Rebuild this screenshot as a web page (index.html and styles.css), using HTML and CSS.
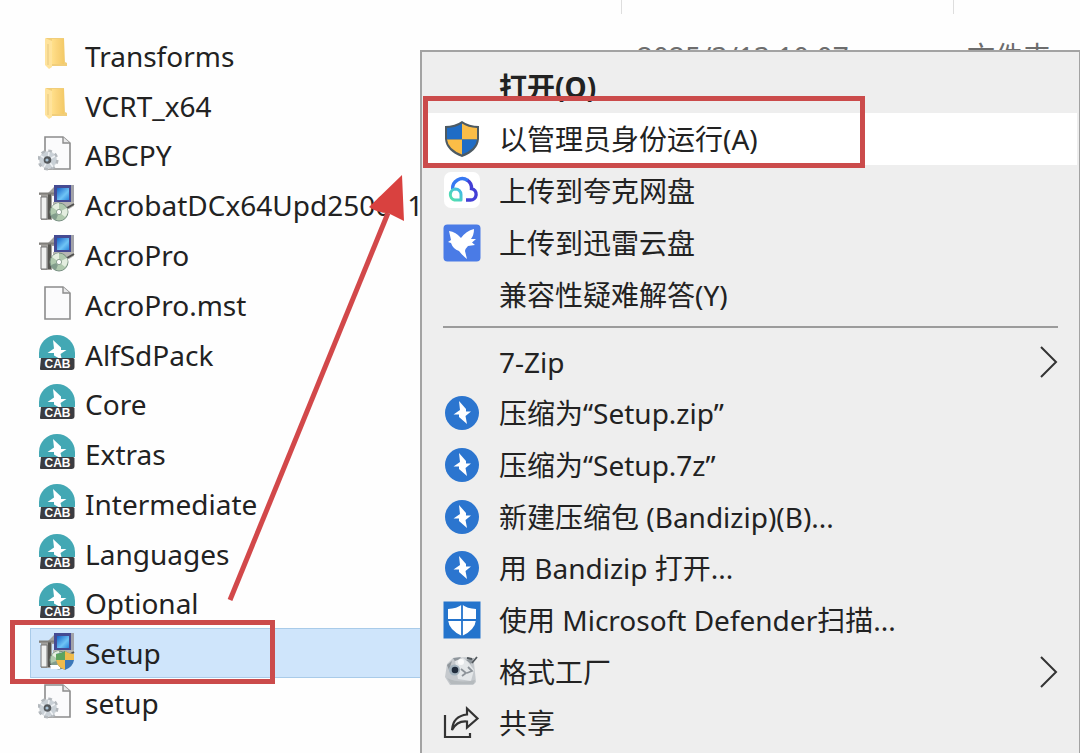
FILE: index.html
```html
<!DOCTYPE html>
<html lang="zh-CN">
<head>
<meta charset="utf-8">
<meta name="viewport" content="width=device-width, initial-scale=1">
<title>Setup</title>
<link rel="stylesheet" href="styles.css">
</head>
<body>
<svg class="sprite" aria-hidden="true">
  <defs>
    <linearGradient id="g-folder" x1="0" y1="0" x2="1" y2="0"><stop offset="0" stop-color="#ffe08a"/><stop offset=".4" stop-color="#fbd57c"/><stop offset="1" stop-color="#f3ca68"/></linearGradient>
    <linearGradient id="g-screen" x1="0" y1="0" x2="1" y2="1"><stop offset="0" stop-color="#1463c8"/><stop offset=".6" stop-color="#6fc4f5"/><stop offset="1" stop-color="#2a86dc"/></linearGradient>
    <linearGradient id="g-cloud" x1="0" y1="1" x2="1" y2="0"><stop offset="0" stop-color="#55e3a8"/><stop offset="1" stop-color="#3fb7e8"/></linearGradient>
  </defs>
  <symbol id="i-folder" viewBox="0 0 38 38">
    <path d="M8 3h18l1 24 2 1v3H11z" fill="#f1ce7a"/>
    <path d="M14 4h12v25H14z" fill="url(#g-folder)"/>
    <path d="M7 3l7 3v26l-3 2-4-4z" fill="#ffe39c"/>
    <path d="M10 9v21" stroke="#eed08a" stroke-width="1.5"/>
  </symbol>
  <symbol id="i-page" viewBox="0 0 38 38">
    <path d="M7 3h18l7 6v26H7z" fill="#fbfbfc" stroke="#8c8c8c" stroke-width="1.6"/>
    <path d="M25 3v6h7" fill="#e9e9ea" stroke="#8c8c8c" stroke-width="1.4"/>
  </symbol>
  <symbol id="i-config" viewBox="0 0 38 38">
    <use href="#i-page" width="38" height="38"/>
    <circle cx="10" cy="26" r="9" fill="#d4d9dd" stroke="#b3b8bd" stroke-width="3" stroke-dasharray="3.600 3.470"/>
    <circle cx="10" cy="26" r="8" fill="#c9d0d6"/>
    <path d="M10 26l7-4M10 26l-4 7M10 26l5 7M10 26l-7-4M10 26l1-8" stroke="#eef1f4" stroke-width="1.5"/>
    <circle cx="9.500" cy="26" r="3.800" fill="#54585c"/><circle cx="9" cy="26" r="1.600" fill="#a9c3d6"/>
  </symbol>
  <symbol id="i-install" viewBox="0 0 38 38">
    <path d="M1 9h9l6-6h2v9h-4v24H3V11H1z" fill="#a3a19d"/>
    <path d="M3 13h6v22H3z" fill="#f0f1f0" stroke="#777" stroke-width="1"/>
    <path d="M10 10h3v25h-3z" fill="#555450"/><path d="M1 9.500h16" stroke="#817f7b" stroke-width="2"/>
    <path d="M16 1h19v17H16z" fill="#454b93"/><path d="M33 1h3v17h-3z" fill="#a2a3a9"/>
    <path d="M19 4h12v12H19z" fill="url(#g-screen)"/>
    <path d="M15 18h21v4l-5 3h-16z" fill="#b7b6b2"/><path d="M29 24l7-4" stroke="#50504f" stroke-width="2"/>
    <circle cx="21" cy="28" r="9" fill="#b0c9ae" stroke="#789082" stroke-width="1"/>
    <path d="M21 28l8-4q2 5-2 9zM21 28l-7-5q3-4 7-4z" fill="#e4eee0"/><path d="M21 28l-8 3q1 4 5 5z" fill="#829d8c"/>
    <circle cx="21" cy="28" r="2.600" fill="#fff" stroke="#8ba091"/>
  </symbol>
  <symbol id="i-install-shield" viewBox="0 0 38 38">
    <use href="#i-install" width="38" height="38"/>
    <path d="M12 33h10v4H13z" fill="#fff"/>
    <path d="M27 19q4 3 9 3v6q-1 7-9 10-8-3-9-10v-6q5 0 9-3z" fill="#3b77b8"/>
    <path d="M27 19q4 3 9 3v6h-9zM27 28v10q-8-3-9-10z" fill="#efbb4c"/><path d="M18 22q5 0 9-3v9h-9z" fill="#5da35f"/>
  </symbol>
  <symbol id="i-uac" viewBox="0 0 38 38">
    <path d="M19 1q7 5 17 5v13q-1 12-17 18Q3 31 2 19V6q10 0 17-5z" fill="#4d5a63"/>
    <path d="M19 3.500v16H4V8q9-.5 15-4.500z" fill="#1f6cc5"/><path d="M19 3.500Q25 7.500 34 8v11.500H19z" fill="#fbbd47"/>
    <path d="M4 19.500h15v15Q5 29 4 19.500z" fill="#fbbd47"/><path d="M34 19.500H19v15q14-5.500 15-15z" fill="#1f6cc5"/>
  </symbol>
  <symbol id="i-quark" viewBox="0 0 38 38">
    <rect x="1" y="0" width="36" height="36" rx="7" fill="#fff"/>
    <path d="M23 28h4.500a5.700 5.700 0 0 0 1-11.300A9.500 9.500 0 0 0 24 8" fill="none" stroke="#433fd6" stroke-width="3.400"/>
    <path d="M9.700 17a9.500 9.500 0 0 1 15-8.500" fill="none" stroke="#3678f2" stroke-width="3.400"/>
    <path d="M18 28v-5.500a5.500 5.500 0 0 0-5.500-5.500 5.600 5.600 0 0 0-1 11z" fill="none" stroke="url(#g-cloud)" stroke-width="3" stroke-linejoin="round"/>
  </symbol>
  <symbol id="i-thunder" viewBox="0 0 38 38">
    <rect x="0.500" y="0.500" width="37" height="37" rx="4" fill="#4a7be6"/>
    <path d="M6 7q7 1 12 7 5-7 13-9 0 6-3 10h5l-4 3.500 3 2.500-7 1q-3 3-3 5l2 8q-5-4-8-8-6-2-8-8l-3-1 3-2z" fill="#fff"/>
  </symbol>
  <symbol id="i-bandizip" viewBox="0 0 38 38">
    <circle cx="19" cy="19" r="17" fill="#2b75cf"/>
    <path d="M16 7l7 8v2.500h5L22.500 22l1.500 8-8-7v-2.500h-5.500L17 16z" fill="#fff"/>
  </symbol>
  <symbol id="i-defender" viewBox="0 0 38 38">
    <path d="M.5.500h37v37H.5z" fill="#2474cc"/>
    <path d="M19 3.500q5 4 14 4.500v11q-1 10-14 16Q6 29 5 19V8q9-.5 14-4.500z" fill="#fff"/>
    <path d="M19 3v32M4 19h30" stroke="#2474cc" stroke-width="1.800"/>
  </symbol>
  <symbol id="i-factory" viewBox="0 0 38 38">
    <path d="M4 11l6-6 16-1 5 6 2 19-3 3H7l-5-8z" fill="#c5c9cd"/>
    <path d="M10 5l8-1-5 6zM23 7l8-2-3 6zM4 12l5-4-3 9z" fill="#8f969c"/>
    <path d="M12 8l8-3 5 4 6 8-3 11-13-2z" fill="#e4e7e9"/>
    <circle cx="11.500" cy="17" r="5.500" fill="#a3b2bd"/><circle cx="12" cy="17" r="3.300" fill="#202c3c"/>
    <path d="M18 16l5 4-4 3M25 14l4 4-5 2" fill="none" stroke="#8d9399" stroke-width="1.800"/>
    <path d="M24 5l5 1M34 4l-5 6" fill="none" stroke="#50565b" stroke-width="1.800"/>
    <path d="M4 25q12 6 28 2l-1 4H8z" fill="#b5babd"/><circle cx="18" cy="9" r="3" fill="#fafafa"/>
  </symbol>
  <symbol id="i-share" viewBox="0 0 38 38">
    <path d="M2 11v22h25v-4" fill="none" stroke="#333" stroke-width="2.200"/>
    <path d="M24 4.500l10.500 10-10.500 9v-6q-10-1-15 8.500 1-14 15-15.500z" fill="none" stroke="#333" stroke-width="2.200"/>
  </symbol>
</svg>
<svg class="sprite-labels" aria-hidden="true">
  <symbol id="i-cab" viewBox="0 0 38 38">
    <path d="M1 24V19a18 18 0 0 1 36 0v5z" fill="#43a8b4"/>
    <path d="M15 6l8 7.500V16h5.500L22.500 20l1.500 6-8-4.500V19H9.500l6.500-4.500z" fill="#fff"/>
    <path d="M3 24h32q1.500 0 1.500 1.500V33q0 3-3 3h-31Q2 36 2 34z" fill="#3b3c41"/>
    <text x="19.500" y="34.300" class="cab-label" text-anchor="middle">CAB</text>
  </symbol>
</svg>

<main class="explorer">
  <div class="columns" aria-hidden="true"><i></i><i></i><i></i></div>
  <table class="files">
    <colgroup><col class="col-icon"><col class="col-name"><col class="col-date"><col class="col-type"></colgroup>
    <tbody>
      <tr><td><svg class="icon"><use href="#i-folder"/></svg></td><td>Transforms</td><td class="meta">2025/3/13 10:07</td><td class="meta">文件夹</td></tr>
      <tr><td><svg class="icon"><use href="#i-folder"/></svg></td><td>VCRT_x64</td><td></td><td></td></tr>
      <tr><td><svg class="icon"><use href="#i-config"/></svg></td><td>ABCPY</td><td></td><td></td></tr>
      <tr><td><svg class="icon"><use href="#i-install"/></svg></td><td>AcrobatDCx64Upd250011</td><td></td><td></td></tr>
      <tr><td><svg class="icon"><use href="#i-install"/></svg></td><td>AcroPro</td><td></td><td></td></tr>
      <tr><td><svg class="icon"><use href="#i-page"/></svg></td><td>AcroPro.mst</td><td></td><td></td></tr>
      <tr><td><svg class="icon"><use href="#i-cab"/></svg></td><td>AlfSdPack</td><td></td><td></td></tr>
      <tr><td><svg class="icon"><use href="#i-cab"/></svg></td><td>Core</td><td></td><td></td></tr>
      <tr><td><svg class="icon"><use href="#i-cab"/></svg></td><td>Extras</td><td></td><td></td></tr>
      <tr><td><svg class="icon"><use href="#i-cab"/></svg></td><td>Intermediate</td><td></td><td></td></tr>
      <tr><td><svg class="icon"><use href="#i-cab"/></svg></td><td>Languages</td><td></td><td></td></tr>
      <tr><td><svg class="icon"><use href="#i-cab"/></svg></td><td>Optional</td><td></td><td></td></tr>
      <tr class="selected"><td><svg class="icon"><use href="#i-install-shield"/></svg></td><td>Setup</td><td></td><td></td></tr>
      <tr><td><svg class="icon"><use href="#i-config"/></svg></td><td>setup</td><td></td><td></td></tr>
    </tbody>
  </table>

  <div class="menu" role="menu">
    <div class="group">
      <button class="item default" role="menuitem"><span class="icon"></span><span>打开(O)</span></button>
      <button class="item active" role="menuitem"><svg class="icon"><use href="#i-uac"/></svg><span>以管理员身份运行(A)</span></button>
      <button class="item" role="menuitem"><svg class="icon"><use href="#i-quark"/></svg><span>上传到夸克网盘</span></button>
      <button class="item" role="menuitem"><svg class="icon"><use href="#i-thunder"/></svg><span>上传到迅雷云盘</span></button>
      <button class="item" role="menuitem"><span class="icon"></span><span>兼容性疑难解答(Y)</span></button>
    </div>
    <hr class="separator">
    <div class="group fill">
      <button class="item" role="menuitem"><span class="icon"></span><span>7-Zip</span><svg class="chevron" viewBox="0 0 18 32"><path d="M1 1l15 15L1 31"/></svg></button>
      <button class="item" role="menuitem"><svg class="icon"><use href="#i-bandizip"/></svg><span>压缩为“Setup.zip”</span></button>
      <button class="item" role="menuitem"><svg class="icon"><use href="#i-bandizip"/></svg><span>压缩为“Setup.7z”</span></button>
      <button class="item" role="menuitem"><svg class="icon"><use href="#i-bandizip"/></svg><span>新建压缩包 (Bandizip)(B)...</span></button>
      <button class="item" role="menuitem"><svg class="icon"><use href="#i-bandizip"/></svg><span>用 Bandizip 打开...</span></button>
      <button class="item" role="menuitem"><svg class="icon"><use href="#i-defender"/></svg><span>使用 Microsoft Defender扫描...</span></button>
      <button class="item" role="menuitem"><svg class="icon"><use href="#i-factory"/></svg><span>格式工厂</span><svg class="chevron" viewBox="0 0 18 32"><path d="M1 1l15 15L1 31"/></svg></button>
      <button class="item" role="menuitem"><svg class="icon"><use href="#i-share"/></svg><span>共享</span></button>
    </div>
  </div>

  <div class="mark mark-action"></div>
  <div class="mark mark-file"></div>
  <svg class="arrow" viewBox="0 0 190 430" aria-hidden="true">
    <path d="M10 425L168 38" stroke="#d2484a" stroke-width="5"/>
    <path d="M182 0L149 32Q158 38 168 38L184 46z" fill="#d9413f"/>
  </svg>
</main>
</body>
</html>
```
FILE: styles.css
```css
* { box-sizing: border-box; }

body {
  margin: 0;
  background: #fefefe;
  color: #222;
  font: 28px/36px "Noto Sans", "Noto Sans CJK SC", sans-serif;
}

.sprite { position: absolute; width: 0; height: 0; }
.sprite-labels { display: none; }

.explorer {
  position: relative;
  display: flex;
  flex-direction: column;
  gap: 17px;
  min-height: 100vh;
  padding-bottom: 25px;
  overflow: hidden;
}

.columns {
  display: grid;
  grid-template-columns: 621px 332px 1fr;
  height: 14px;
}
.columns i + i { border-left: 1px solid #dedede; }

.files {
  flex: 1;
  width: calc(100% - 30px);
  height: calc(100vh - 56px);
  margin-left: 30px;
  border-collapse: collapse;
  table-layout: fixed;
}
.col-icon { width: 55px; }
.col-name { width: 552px; }
.col-date { width: 330px; }
.files td { padding: 0; white-space: nowrap; vertical-align: middle; }
.files td:first-child { padding-left: 8px; }
.files .meta { color: #6d6d6d; }
.files .icon { margin-bottom: 4px; }
.selected { background: #cfe5fb; outline: 1px solid #a9cbe9; outline-offset: -1px; }

.icon { display: block; flex: none; width: 38px; height: 38px; }
.cab-label { font: 700 12px/12px "Liberation Sans", sans-serif; fill: #fff; }

.menu {
  position: absolute;
  top: 50px;
  right: 0;
  bottom: 0;
  left: 420px;
  display: flex;
  flex-direction: column;
  padding: 9px 2px 4px;
  background: #eee;
  border: solid #a3a3a3;
  border-width: 2px 1px 0 2px;
}
.group { display: grid; grid-auto-rows: 52px; }
.group.fill { flex: 1; grid-auto-rows: 1fr; }

.item {
  display: flex;
  align-items: center;
  gap: 18px;
  min-width: 0;
  padding: 0 19px;
  border: 0;
  background: none;
  color: #222;
  font: inherit;
  text-align: left;
  white-space: nowrap;
}
.item.default { font-weight: 700; }
.item.active { background: #fff; }

.chevron {
  width: 18px;
  height: 32px;
  margin-left: auto;
  fill: none;
  stroke: #333;
  stroke-width: 2;
}

.separator {
  width: calc(100% - 38px);
  height: 2px;
  margin: 5px 19px 8px;
  border: 0;
  background: #9b9b9b;
}

.mark { position: absolute; border: 5px solid #cb4b4b; }
.mark-action { top: 96px; left: 423px; width: 442px; height: 72px; }
.mark-file { top: 620px; left: 10px; width: 265px; height: 64px; }
.arrow { position: absolute; top: 175px; left: 220px; width: 190px; height: 430px; }
```
